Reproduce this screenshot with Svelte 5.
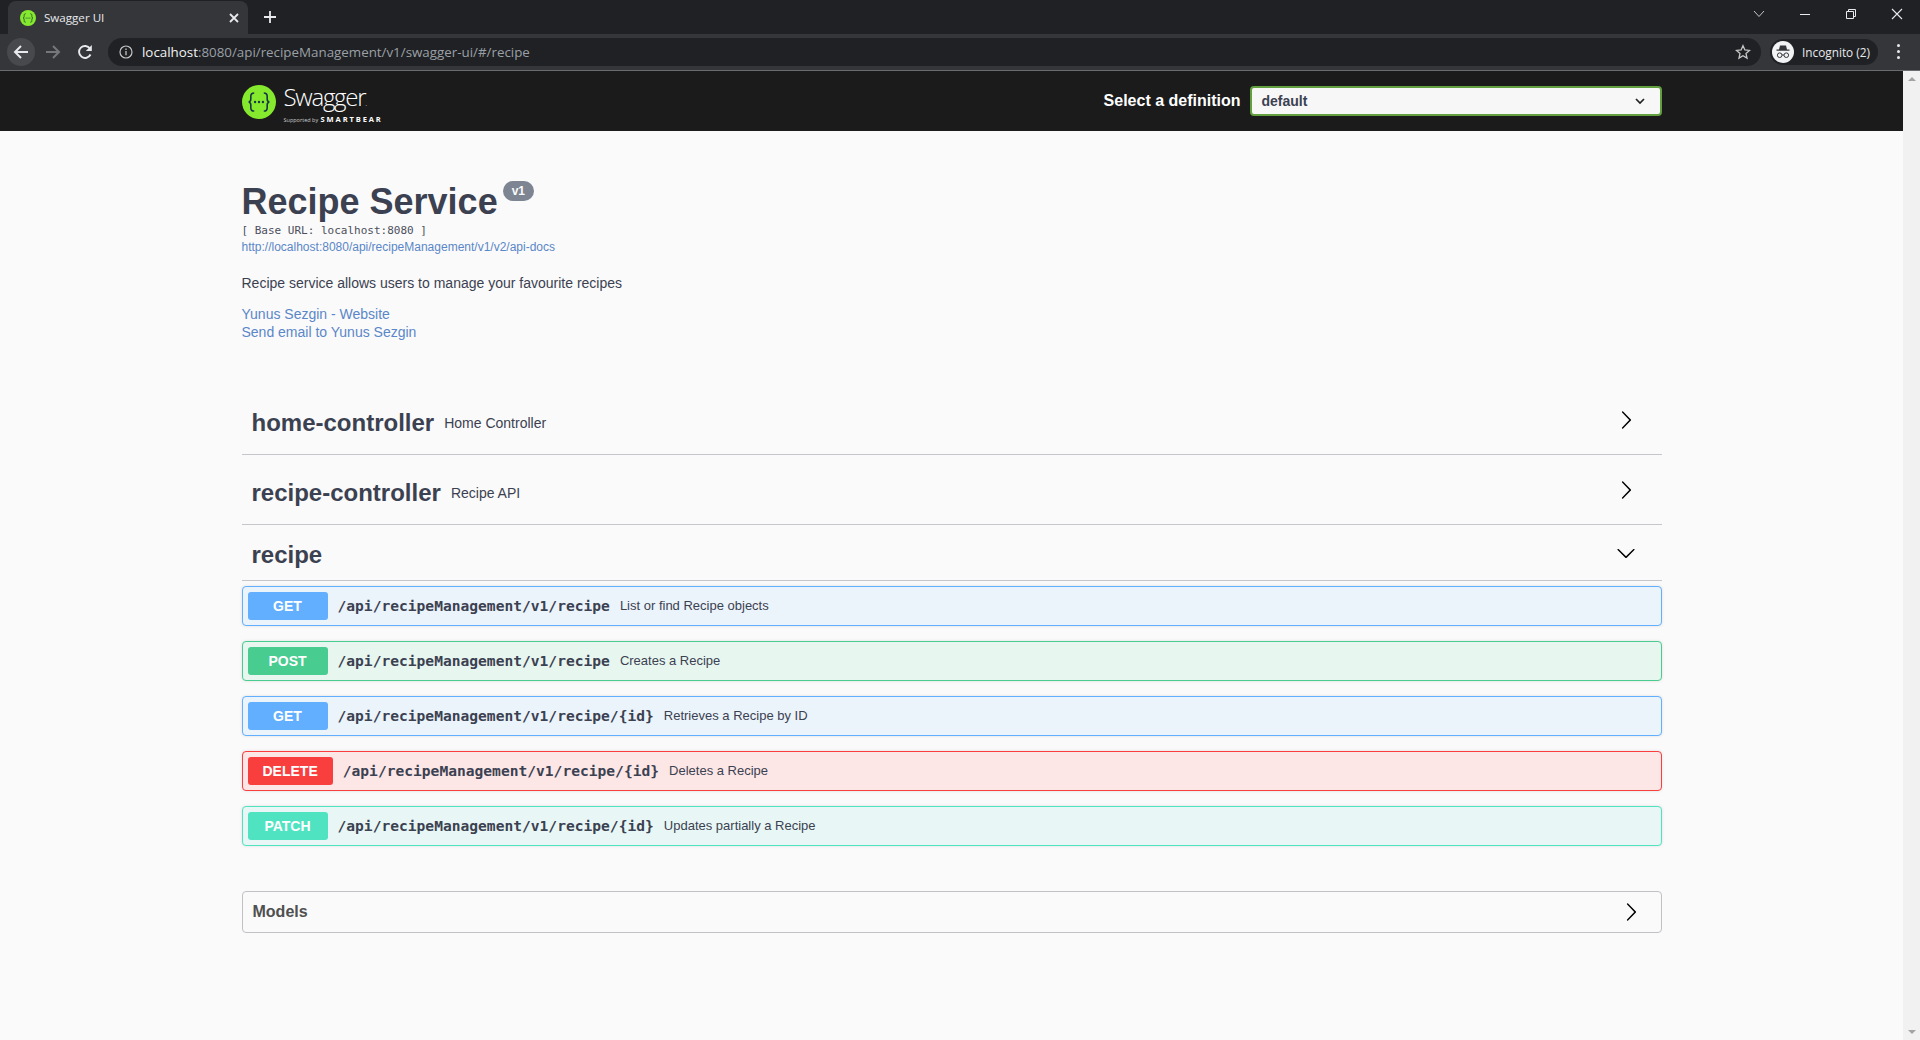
<script>
	const arrow =
		'M13.25 10L6.109 2.58a.697.697 0 0 1 0-.979.68.68 0 0 1 .969 0l7.83 7.908a.697.697 0 0 1 0 .979l-7.83 7.908a.68.68 0 0 1-.969 0 .697.697 0 0 1 0-.979L13.25 10z';
	const arrowDown =
		'M17.418 6.109c.272-.268.709-.268.979 0s.271.701 0 .969l-7.908 7.83c-.27.268-.707.268-.979 0l-7.908-7.83c-.27-.268-.27-.701 0-.969.271-.268.709-.268.979 0L10 13.25l7.418-7.141z';

	const tags = [
		{ name: 'home-controller', desc: 'Home Controller' },
		{ name: 'recipe-controller', desc: 'Recipe API' }
	];

	const base = '/api/recipeManagement/v1/recipe';
	const ops = [
		{ method: 'GET', path: base, desc: 'List or find Recipe objects' },
		{ method: 'POST', path: base, desc: 'Creates a Recipe' },
		{ method: 'GET', path: base + '/{id}', desc: 'Retrieves a Recipe by ID' },
		{ method: 'DELETE', path: base + '/{id}', desc: 'Deletes a Recipe' },
		{ method: 'PATCH', path: base + '/{id}', desc: 'Updates partially a Recipe' }
	];
</script>

{#snippet logo(size)}
	<svg width={size} height={size} viewBox="0 0 32 32">
		<circle cx="16" cy="16" r="16" fill="#85ea2d" />
		<path
			d="M11.5 7.5c-2.6 0-3.2 1.300-3.200 3.200v2.700c0 1.500-.7 2.300-2 2.600 1.300.3 2 1.100 2 2.600v2.700c0 1.900.6 3.200 3.200 3.200M20.500 7.500c2.600 0 3.200 1.300 3.200 3.200v2.700c0 1.500.7 2.300 2 2.600-1.300.3-2 1.100-2 2.600v2.700c0 1.900-.6 3.200-3.200 3.200"
			fill="none"
			stroke="#173647"
			stroke-width="1.500"
		/>
		<circle cx="12.300" cy="16" r="1.100" fill="#173647" />
		<circle cx="16" cy="16" r="1.100" fill="#173647" />
		<circle cx="19.700" cy="16" r="1.100" fill="#173647" />
	</svg>
{/snippet}

<div class="browser">
	<div class="tabstrip">
		<div class="tab">
			{@render logo(16)}
			<span class="tab-title">Swagger UI</span>
			<svg class="tab-close" width="10" height="10" viewBox="0 0 10 10">
				<path d="M1 1l8 8M9 1l-8 8" stroke="#e8eaed" stroke-width="1.800" />
			</svg>
		</div>
		<svg class="new-tab" width="14" height="14" viewBox="0 0 14 14">
			<path d="M7 1v12M1 7h12" stroke="#e8eaed" stroke-width="1.800" />
		</svg>
		<div class="win-controls">
			<svg width="12" height="8" viewBox="0 0 12 8">
				<path d="M1 1l5 5.500L11 1" fill="none" stroke="#c4c7c5" />
			</svg>
			<svg width="12" height="12" viewBox="0 0 12 12">
				<path d="M1 6.500h10" stroke="#e8eaed" />
			</svg>
			<svg width="12" height="12" viewBox="0 0 12 12">
				<path d="M1.500 3.500h7v7h-7zM3.500 3.500v-2h7v7h-2" fill="none" stroke="#e8eaed" />
			</svg>
			<svg width="12" height="12" viewBox="0 0 12 12">
				<path d="M1 1l10 10M11 1L1 11" stroke="#e8eaed" stroke-width="1.100" />
			</svg>
		</div>
	</div>

	<div class="toolbar">
		<div class="nav-btn back">
			<svg width="16" height="16" viewBox="0 0 16 16">
				<path d="M15 8H2M8 2L2 8l6 6" fill="none" stroke="#e8eaed" stroke-width="2" />
			</svg>
		</div>
		<div class="nav-btn">
			<svg width="16" height="16" viewBox="0 0 16 16">
				<path d="M1 8h13M8 2l6 6-6 6" fill="none" stroke="#75777b" stroke-width="2" />
			</svg>
		</div>
		<div class="nav-btn">
			<svg width="16" height="16" viewBox="0 0 16 16">
				<path d="M13.500 10.500A6 6 0 1 1 13 4.500" fill="none" stroke="#e8eaed" stroke-width="1.900" />
				<path d="M14.800 1v6h-6z" fill="#e8eaed" />
			</svg>
		</div>
		<div class="omnibox">
			<svg width="14" height="14" viewBox="0 0 14 14">
				<circle cx="7" cy="7" r="6" fill="none" stroke="#c4c7c5" stroke-width="1.200" />
				<path d="M7 6v4.300M7 3.500v1.400" stroke="#c4c7c5" stroke-width="1.300" />
			</svg>
			<span class="url"><b>localhost</b>:8080/api/recipeManagement/v1/swagger-ui/#/recipe</span>
			<svg class="star" width="16" height="16" viewBox="0 0 16 16">
				<path
					d="M8 1.700l1.900 4.300 4.600.4-3.500 3.100 1 4.600L8 11.700l-4 2.400 1-4.600-3.500-3.100 4.600-.4z"
					fill="none"
					stroke="#c4c7c5"
					stroke-width="1.300"
				/>
			</svg>
		</div>
		<div class="profile">
			<svg width="22" height="22" viewBox="0 0 22 22">
				<circle cx="11" cy="11" r="11" fill="#f1f3f4" />
				<path d="M8 4.500h6l1 4h2.500v1.200h-13V8.500H7z" fill="#35363a" />
				<circle cx="7.700" cy="14.200" r="2.300" fill="none" stroke="#35363a" />
				<circle cx="14.300" cy="14.200" r="2.300" fill="none" stroke="#35363a" />
				<path d="M10 14h2" stroke="#35363a" />
			</svg>
			<span>Incognito (2)</span>
		</div>
		<div class="menu-dots"><i></i><i></i><i></i></div>
	</div>

	<div class="page">
		<div class="content">
			<header class="topbar">
				<div class="topbar-inner">
					<div class="brand">
						{@render logo(34)}
						<div class="brand-text">
							<div class="brand-name">Swagger<small>.</small></div>
							<div class="brand-sub"><span>Supported by</span> <b>SMARTBEAR</b></div>
						</div>
					</div>
					<div class="definition">
						<span>Select a definition</span>
						<div class="select">
							default
							<svg width="10" height="7" viewBox="0 0 10 7">
								<path d="M1 1l4 4 4-4" fill="none" stroke="#222" stroke-width="1.700" />
							</svg>
						</div>
					</div>
				</div>
			</header>

			<main class="wrapper">
				<section class="info">
					<div class="title-row">
						<h2>Recipe Service</h2>
						<span class="version">v1</span>
					</div>
					<div class="base-url">[ Base URL: localhost:8080 ]</div>
					<a class="docs" href="#docs">http://localhost:8080/api/recipeManagement/v1/v2/api-docs</a>
					<p class="desc">Recipe service allows users to manage your favourite recipes</p>
					<a class="contact" href="#site">Yunus Sezgin - Website</a>
					<a class="contact" href="#mail">Send email to Yunus Sezgin</a>
				</section>

				{#each tags as tag}
					<div class="tag">
						<h4>{tag.name}</h4>
						<small>{tag.desc}</small>
						<svg width="20" height="20" viewBox="0 0 20 20"><path d={arrow} /></svg>
					</div>
				{/each}
				<div class="tag open">
					<h4>recipe</h4>
					<svg width="20" height="20" viewBox="0 0 20 20"><path d={arrowDown} /></svg>
				</div>

				<div class="ops">
					{#each ops as op}
						<div class="op {op.method.toLowerCase()}">
							<span class="method">{op.method}</span>
							<span class="path">{op.path}</span>
							<span class="summary">{op.desc}</span>
						</div>
					{/each}
				</div>

				<div class="models">
					<h4>Models</h4>
					<svg width="20" height="20" viewBox="0 0 20 20"><path d={arrow} /></svg>
				</div>
			</main>
		</div>

		<div class="scrollbar">
			<span class="up"></span>
			<span class="down"></span>
		</div>
	</div>
</div>

<style>
	:global(body) {
		margin: 0;
		overflow: hidden;
		background: #fafafa;
	}
	.browser {
		display: flex;
		flex-direction: column;
		height: 1040px;
		font-family: 'Liberation Sans', Arial, sans-serif;
		color: #3b4151;
	}

	/* chrome */
	.tabstrip {
		display: flex;
		align-items: center;
		height: 34px;
		padding-left: 8px;
		background: #202124;
		box-sizing: border-box;
	}
	.tab {
		display: flex;
		align-items: center;
		align-self: flex-end;
		width: 240px;
		height: 33px;
		padding: 0 12px;
		box-sizing: border-box;
		background: #35363a;
		border-radius: 8px 8px 0 0;
	}
	.tab-title {
		flex: 1;
		margin-left: 8px;
		font: 11.600px 'Open Sans', sans-serif;
		color: #e8eaed;
	}
	.tab-close {
		margin-right: -3px;
	}
	.new-tab {
		margin-left: 15px;
	}
	.win-controls {
		display: flex;
		align-items: center;
		gap: 34px;
		margin-left: auto;
		margin-right: 17px;
		margin-top: -6px;
	}
	.toolbar {
		display: flex;
		align-items: center;
		height: 37px;
		padding: 0 0 1px 7px;
		box-sizing: border-box;
		background: #35363a;
		border-bottom: 1px solid #6b6c6f;
	}
	.nav-btn {
		display: flex;
		align-items: center;
		justify-content: center;
		width: 28px;
		height: 28px;
		margin-right: 4px;
		border-radius: 50%;
	}
	.nav-btn.back {
		background: #48494d;
	}
	.omnibox {
		display: flex;
		align-items: center;
		width: 1653px;
		height: 28px;
		margin-left: 5px;
		padding: 0 10px 0 11px;
		box-sizing: border-box;
		background: #202124;
		border-radius: 14px;
	}
	.url {
		flex: 1;
		margin-left: 9px;
		font: 13.350px 'Open Sans', sans-serif;
		color: #9aa0a6;
	}
	.url b {
		font-weight: 400;
		color: #f1f3f4;
	}
	.profile {
		display: flex;
		align-items: center;
		gap: 8px;
		height: 26px;
		margin-left: 9px;
		padding: 0 8px 0 2px;
		background: #202124;
		border-radius: 13px;
		font: 11.800px 'Open Sans', sans-serif;
		color: #e8eaed;
	}
	.menu-dots {
		display: flex;
		flex-direction: column;
		gap: 3px;
		margin-left: 19px;
	}
	.menu-dots i {
		width: 3px;
		height: 3px;
		border-radius: 50%;
		background: #e8eaed;
	}

	/* page */
	.page {
		display: flex;
		flex: 1;
		min-height: 0;
	}
	.content {
		flex: 1;
		min-width: 0;
	}
	.scrollbar {
		display: flex;
		flex-direction: column;
		justify-content: space-between;
		align-items: center;
		width: 17px;
		padding: 6px 0;
		box-sizing: border-box;
		background: #f1f1f1;
	}
	.up,
	.down {
		border-left: 4px solid transparent;
		border-right: 4px solid transparent;
	}
	.up {
		border-bottom: 4px solid #a3a3a3;
	}
	.down {
		border-top: 4px solid #a3a3a3;
	}
	.topbar {
		background: #1b1b1b;
		padding: 10px 0;
		height: 60px;
		box-sizing: border-box;
	}
	.topbar-inner {
		display: flex;
		justify-content: space-between;
		align-items: center;
		max-width: 1420px;
		height: 100%;
		margin: 0 auto;
	}
	.brand {
		display: flex;
		align-items: center;
		gap: 8px;
		margin-top: 1px;
	}
	.brand-text {
		color: #fff;
		padding-top: 4px;
	}
	.brand-name {
		font: 300 24px/25px 'Open Sans', sans-serif;
		letter-spacing: -1.250px;
	}
	.brand-name small {
		font-size: 8px;
	}
	.brand-sub {
		font: 5.500px/8px 'Open Sans', sans-serif;
		color: #ccc;
	}
	.brand-sub b {
		margin-left: 1px;
		font-size: 7.500px;
		letter-spacing: 1.900px;
		color: #fff;
	}
	.definition {
		display: flex;
		align-items: center;
		gap: 9px;
		font-size: 16px;
		font-weight: 700;
		color: #fff;
	}
	.select {
		display: flex;
		align-items: center;
		justify-content: space-between;
		width: 412px;
		height: 30px;
		padding: 0 15px 0 10px;
		box-sizing: border-box;
		border: 2px solid #62a03f;
		border-radius: 4px;
		background: #f7f7f7;
		font-size: 14px;
		color: #3b4151;
	}
	.wrapper {
		max-width: 1420px;
		margin: 0 auto;
	}
	.info {
		display: flex;
		flex-direction: column;
		align-items: flex-start;
		padding-top: 50px;
		margin-bottom: 44px;
	}
	.title-row {
		display: flex;
		align-items: flex-start;
	}
	h2 {
		margin: 0;
		font-size: 36px;
		line-height: 42px;
		font-weight: 700;
	}
	.version {
		margin: 0 0 0 5px;
		padding: 2px 9px;
		border-radius: 10px;
		background: #7d8492;
		font-size: 12px;
		line-height: 16px;
		font-weight: 700;
		color: #fafafa;
	}
	.base-url {
		font: 11px/14px 'DejaVu Sans Mono', monospace;
		margin-top: 1px;
		color: #4b4f5c;
	}
	.docs {
		margin-top: 2px;
		font-size: 12px;
		line-height: 14px;
		color: #5a87c8;
		text-decoration: none;
	}
	.desc {
		margin: 21px 0 14px;
		font-size: 14px;
		line-height: 16px;
	}
	.contact {
		font-size: 14px;
		line-height: 18px;
		color: #5a87c8;
		text-decoration: none;
	}
	.tag {
		display: flex;
		align-items: center;
		padding: 21px 26px 14px 10px;
		border-bottom: 1px solid #c4c6cb;
	}
	.tag.open {
		padding: 13px 26px 8px 10px;
	}
	h4 {
		margin: 0;
		font-size: 24px;
		line-height: 34px;
		font-weight: 700;
	}
	.tag small {
		margin-left: 10px;
		font-size: 14px;
		line-height: 34px;
	}
	.tag svg {
		margin: -6px 0 0 auto;
	}
	.tag.open svg {
		margin-top: -4px;
	}
	.ops {
		display: flex;
		flex-direction: column;
		gap: 15px;
		margin-top: 5px;
	}
	.op {
		--c: #61affe;
		--bg: #ebf3fb;
		display: flex;
		align-items: center;
		height: 40px;
		padding: 0 5px;
		box-sizing: border-box;
		border: 1px solid var(--c);
		border-radius: 4px;
		background: var(--bg);
		box-shadow: 0 0 3px rgba(0, 0, 0, 0.12);
	}
	.post {
		--c: #49cc90;
		--bg: #e8f6f0;
	}
	.delete {
		--c: #f93e3e;
		--bg: #fce6e6;
	}
	.patch {
		--c: #50e3c2;
		--bg: #e8f7f5;
	}
	.method {
		min-width: 80px;
		padding: 6px 15px;
		box-sizing: border-box;
		border-radius: 3px;
		background: var(--c);
		font-size: 14px;
		line-height: 16px;
		font-weight: 700;
		text-align: center;
		color: #fff;
	}
	.path {
		margin-top: -2px;
		padding: 0 10px;
		font: 700 14.600px 'DejaVu Sans Mono', monospace;
	}
	.summary {
		margin-top: -2px;
		font-size: 13px;
	}
	.models {
		display: flex;
		align-items: center;
		justify-content: space-between;
		height: 42px;
		margin-top: 45px;
		padding: 0 20px 0 10px;
		box-sizing: border-box;
		border: 1px solid #c0c1c5;
		border-radius: 4px;
	}
	.models h4 {
		font-size: 16px;
		color: #505050;
	}
</style>
